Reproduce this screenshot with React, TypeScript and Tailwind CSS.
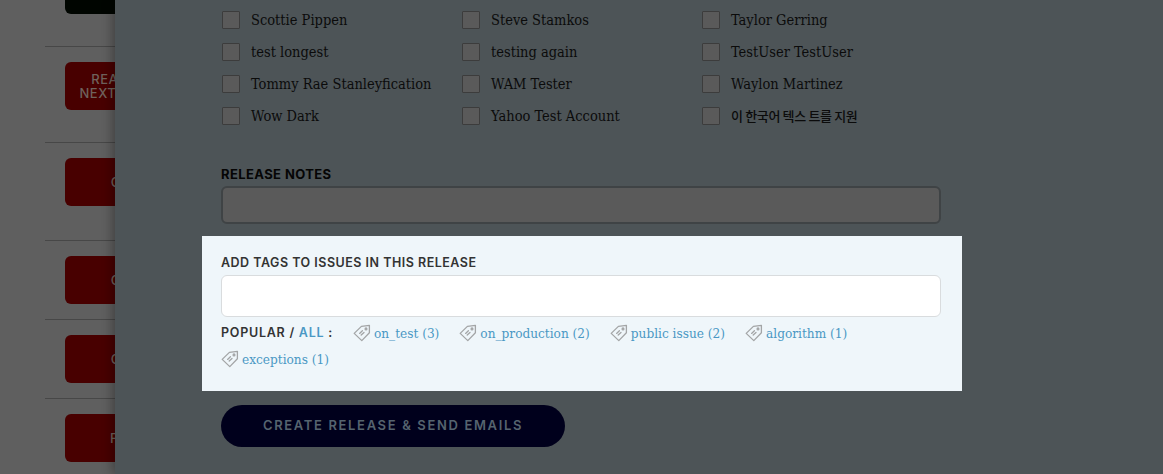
const names = [
  'Scottie Pippen', 'Steve Stamkos', 'Taylor Gerring',
  'test longest', 'testing again', 'TestUser TestUser',
  'Tommy Rae Stanleyfication', 'WAM Tester', 'Waylon Martinez',
  'Wow Dark', 'Yahoo Test Account',
];

const tags = ['on_test (3)', 'on_production (2)', 'public issue (2)', 'algorithm (1)', 'exceptions (1)'];

function TagIcon() {
  return (
    <svg width="18" height="18" viewBox="0 0 18 18" fill="none" stroke="#a3a5a6" strokeWidth="1.3" strokeLinejoin="round" strokeLinecap="round" className="shrink-0">
      <path d="M1.2 9.4 L8.4 2.4 L16.4 1.4 L16.4 8.8 L8.8 16.6 Z" />
      <circle cx="13" cy="4.9" r="0.9" />
      <path d="M6.6 9.4 L9.4 6.8 M8.2 11 L11 8.4" />
    </svg>
  );
}

function SideAction({ children, rule = true }: { children: React.ReactNode; rule?: boolean }) {
  return (
    <div className={`ml-[45px] w-[200px] pl-5 ${rule ? 'border-b border-[#474747]' : ''}`}>
      {children}
    </div>
  );
}

function RedButton({ children }: { children: React.ReactNode }) {
  return (
    <div className="flex h-12 w-[130px] items-center justify-center rounded-md bg-[#480000] text-center text-[13px] leading-[14px] font-medium tracking-[0.5px] text-[#6f625c]">
      {children}
    </div>
  );
}

function Checkbox() {
  return <span className="mr-[11px] h-[18px] w-[18px] shrink-0 rounded-[1px] border border-[#3c3c3c] bg-[#5a5a5a]" />;
}

export default function App() {
  return (
    <div className="flex h-[474px] w-[1163px] overflow-hidden bg-[#4d5457] font-['DejaVu_Serif_Condensed','DejaVu_Serif',serif]">
      {/* Dimmed page behind the panel */}
      <div className="h-full w-[115px] shrink-0 overflow-hidden bg-[#5f5f5f] font-['Inter',sans-serif]">
        <SideAction>
          <div className="-mt-[34px] mb-8 flex h-12 w-[130px] items-end justify-center rounded-md bg-[#000500] pb-[18px] text-[13px] leading-[14px] text-[#6f7a72]">
            NEXT
          </div>
        </SideAction>
        <SideAction>
          <div className="pt-[15px] pb-8"><RedButton>READY FOR<br />NEXT RELEASE</RedButton></div>
        </SideAction>
        <SideAction>
          <div className="pt-[15px] pb-[34px]"><RedButton>CODE</RedButton></div>
        </SideAction>
        <SideAction>
          <div className="pt-[15px] pb-[15px]"><RedButton>CODE</RedButton></div>
        </SideAction>
        <SideAction>
          <div className="pt-[15px] pb-[15px]"><RedButton>CODE</RedButton></div>
        </SideAction>
        <SideAction rule={false}>
          <div className="pt-[15px]"><RedButton>FIXED</RedButton></div>
        </SideAction>
      </div>

      {/* Release panel */}
      <div className="relative h-full flex-1 bg-[#4d5457] shadow-[-3px_0_10px_rgba(0,0,0,0.3)]">
        <div className="ml-[87px] w-[760px]">
          <div className="grid grid-cols-[240px_240px_240px] gap-y-[14px] pt-[11px] pl-5">
            {names.map((name) => (
              <div key={name} className="flex h-[18px] items-center">
                <Checkbox />
                <span className="pt-px text-[14.5px] whitespace-nowrap text-[#0b0b0b]">{name}</span>
              </div>
            ))}
            <div className="flex h-[18px] items-center">
              <Checkbox />
              <span className="text-[13px] font-medium tracking-[-0.35px] whitespace-nowrap text-[#0b0b0b] font-['Noto_Sans_CJK_KR',sans-serif]">이 한국어 텍스 트를 지원</span>
            </div>
          </div>

          <div className="mt-[41px] pr-[21px] pl-[19px]">
            <div className="text-[13px] leading-[16px] font-bold tracking-[0.4px] text-[#050505] font-['Inter',sans-serif]">RELEASE NOTES</div>
            <div className="mt-[4px] h-[38px] rounded-md border-2 border-[#3f4345] bg-[#5a5a5a]" />
          </div>

          <div className="mt-3 h-[155px] bg-[#eff6fa] pt-[19px] pr-[21px] pl-[19px]">
            <div className="text-[12.5px] leading-[16px] font-semibold tracking-[0.5px] text-[#333] font-['Inter',sans-serif]">ADD TAGS TO ISSUES IN THIS RELEASE</div>
            <div className="mt-1 h-[42px] rounded-md border border-[#d9dcde] bg-white" />
            <div className="mt-[3px] flex flex-wrap items-center">
              <span className="mr-[20px] flex h-[26px] items-center text-[12.5px] font-semibold tracking-[0.75px] text-[#333] font-['Inter',sans-serif]">
                POPULAR /&nbsp;<span className="text-[#4a98c4]">ALL</span>&nbsp;:
              </span>
              {tags.map((tag) => (
                <span key={tag} className="mr-[20px] flex h-[26px] items-center gap-[3px] text-[13.5px] whitespace-nowrap text-[#4a98c4]">
                  <TagIcon />
                  {tag}
                </span>
              ))}
            </div>
          </div>

          <div className="mt-[14px] px-[19px]">
            <div className="flex h-[42px] w-[344px] items-center justify-center rounded-full bg-[#00001c] text-[13px] font-semibold tracking-[1.65px] text-[#56646f] font-['Inter',sans-serif]">
              CREATE RELEASE &amp; SEND EMAILS
            </div>
          </div>
        </div>
      </div>
    </div>
  );
}
